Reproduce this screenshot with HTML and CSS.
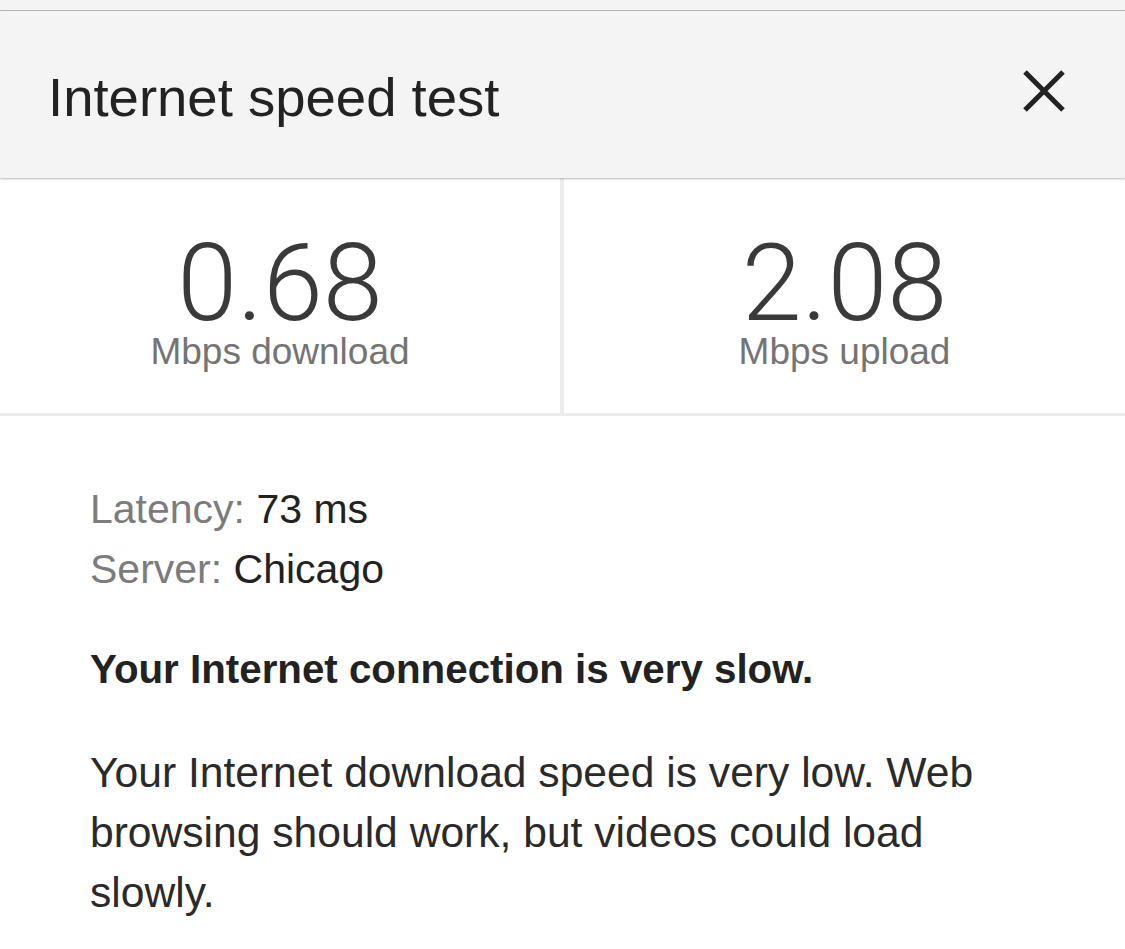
FILE: index.html
```html
<!DOCTYPE html>
<html lang="en">
<head>
<meta charset="utf-8">
<title>Internet speed test</title>
<link rel="stylesheet" href="styles.css">
</head>
<body>
<div class="top-strip"></div>
<header class="header">
  <h1 class="title">Internet speed test</h1>
  <button class="close" aria-label="Close">
    <svg width="42" height="42" viewBox="0 0 42 42"><path d="M2 2 L40 40 M40 2 L2 40" stroke="#222" stroke-width="5" fill="none"/></svg>
  </button>
</header>
<section class="stats">
  <div class="stat stat-left">
    <div class="stat-value">0.68</div>
    <div class="stat-label">Mbps download</div>
  </div>
  <div class="stat">
    <div class="stat-value">2.08</div>
    <div class="stat-label">Mbps upload</div>
  </div>
</section>
<section class="details">
  <div class="meta">
    <div class="meta-row"><span class="meta-key">Latency:</span> <span class="meta-val">73 ms</span></div>
    <div class="meta-row"><span class="meta-key">Server:</span> <span class="meta-val">Chicago</span></div>
  </div>
  <p class="verdict">Your Internet connection is very slow.</p>
  <p class="desc">Your Internet download speed is very low. Web browsing should work, but videos could load slowly.</p>
</section>
</body>
</html>
```
FILE: styles.css
```css
html, body {
  margin: 0;
  padding: 0;
  background: #ffffff;
  font-family: "Liberation Sans", Arial, sans-serif;
  overflow: hidden;
}

.top-strip {
  height: 10px;
  background: #f4f4f4;
  border-bottom: 1px solid #b5b5b5;
}

.header {
  display: flex;
  justify-content: space-between;
  align-items: flex-start;
  background: #f4f4f4;
  height: 167px;
  box-sizing: border-box;
  padding: 57px 60px 0 48px;
  box-shadow: 0 1px 2px rgba(0, 0, 0, 0.28);
  position: relative;
  z-index: 1;
}

.title {
  margin: 0;
  font-size: 54.5px;
  line-height: 60px;
  font-weight: 400;
  color: #222222;
}

.close {
  margin-top: 2px;
  padding: 0;
  border: 0;
  background: none;
  width: 42px;
  height: 42px;
  display: block;
}

.close svg {
  display: block;
}

.stats {
  display: grid;
  grid-template-columns: 564px 1fr;
  height: 238px;
  box-sizing: border-box;
  border-bottom: 3px solid #ececec;
}

.stat {
  display: flex;
  flex-direction: column;
  align-items: center;
  padding-top: 55px;
}

.stat-left {
  border-right: 4px solid #ececec;
}

.stat-value {
  font-family: Roboto, "Liberation Sans", sans-serif;
  font-weight: 300;
  font-size: 108px;
  line-height: 100px;
  color: #3a3a3a;
}

.stat-label {
  font-size: 37px;
  line-height: 36px;
  color: #747474;
  margin-top: 1px;
}

.details {
  padding: 63px 90px 0 90px;
}

.meta-row {
  font-size: 41px;
  line-height: 60px;
  color: #222222;
}

.meta-key {
  color: #7c7c7c;
}

.verdict {
  margin: 41px 0 0 0;
  font-size: 40.3px;
  line-height: 60px;
  font-weight: 700;
  color: #222222;
}

.desc {
  margin: 42px 0 0 0;
  font-size: 42.6px;
  line-height: 60px;
  color: #2a2a2a;
}
```
